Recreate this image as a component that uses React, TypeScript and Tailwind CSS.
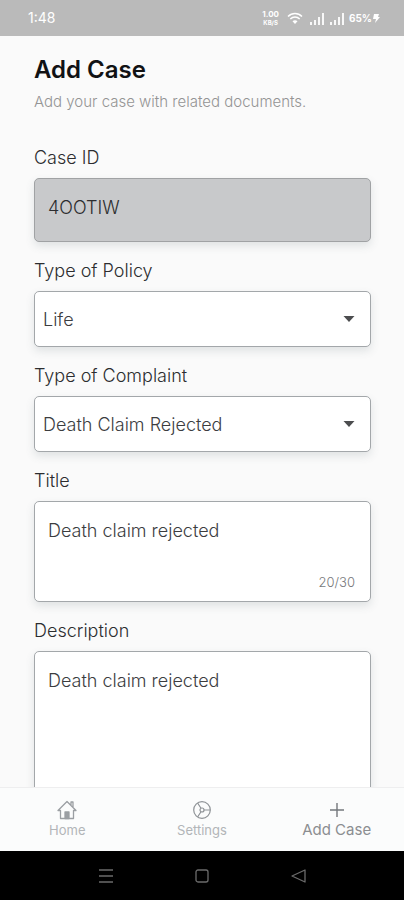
import { useState, type ReactNode } from 'react';

const field =
  'block w-full rounded-[5px] border border-[#a3a7aa] bg-white text-[#3c3d3f] shadow-[0_4px_8px_rgba(90,105,115,0.16)] outline-none';

function Field({ id, label, children }: { id: string; label: string; children: ReactNode }) {
  return (
    <div className="flex flex-col gap-2">
      <label htmlFor={id} className="text-[18px] leading-6 font-light text-[#2c2d2f]">
        {label}
      </label>
      {children}
    </div>
  );
}

function SelectField({ id, label, options }: { id: string; label: string; options: string[] }) {
  return (
    <Field id={id} label={label}>
      <div className="relative">
        <select id={id} className={`${field} h-14 appearance-none pr-10 pl-2 text-[18px] font-light`}>
          {options.map((option) => (
            <option key={option}>{option}</option>
          ))}
        </select>
        <svg className="pointer-events-none absolute top-1/2 right-4 -translate-y-1/2" width="12" height="6" viewBox="0 0 12 6" fill="#4c4d4f" aria-hidden="true">
          <path d="M0.5 0h11L6 6z" />
        </svg>
      </div>
    </Field>
  );
}

function Signal() {
  return (
    <svg width="16" height="13" viewBox="0 0 16 13" fill="white" fillOpacity="0.9" aria-hidden="true">
      <path d="M1 10h2v3H1zM5 8h2v5H5zM9 5h2v8H9zM13 1h2v12h-2z" />
    </svg>
  );
}

function StatusBar() {
  return (
    <header className="flex h-9 shrink-0 items-center justify-between bg-[#bababa] pr-6 pl-7 text-white">
      <span className="text-[14px] leading-5">1:48</span>
      <div className="flex items-center gap-1">
        <span className="flex flex-col items-center font-bold">
          <span className="text-[8px] leading-[10px]">1.00</span>
          <span className="text-[6px] leading-2">KB/S</span>
        </span>
        <svg className="mr-0.5 ml-1" width="16" height="13" viewBox="0 0 16 13" fill="none" stroke="white" strokeWidth="1.5" aria-hidden="true">
          <path d="M1 4.5C5 .5 11 .5 15 4.5M3.3 7C6 4.4 10 4.4 12.7 7" />
          <path d="M5.5 9.2C7 7.9 9 7.9 10.5 9.2L8 12z" fill="white" stroke="none" />
        </svg>
        <Signal />
        <div className="flex items-center">
          <Signal />
          <span className="pl-1 text-[10px] leading-4 font-bold">65%</span>
          <svg width="8" height="10" viewBox="0 0 8 10" fill="white" aria-hidden="true">
            <path d="M2 1h5L6 4h2L3 10l1-4H1z" />
          </svg>
        </div>
      </div>
    </header>
  );
}

function HomeIcon() {
  return (
    <svg width="20" height="20" viewBox="0 0 20 20" fill="none" stroke="#9b9fa3" strokeWidth="1.3" strokeLinejoin="round" aria-hidden="true">
      <path d="M1 10.5L10 1.5l9 9h-2.5V18.5h-13V10.5zM14 5.5V2h2v5.5" />
      <path d="M8 18.5V12h4v6.5z" fill="#9b9fa3" />
    </svg>
  );
}

function SettingsIcon() {
  return (
    <svg width="20" height="20" viewBox="0 0 20 20" fill="none" stroke="#8f9397" strokeWidth="1.2" aria-hidden="true">
      <circle cx="10" cy="10" r="8.3" />
      <circle cx="10" cy="10" r="2" />
      <path d="M12 10h6.3M9 8.3L5.6 3M9 11.7L5.6 17" />
    </svg>
  );
}

function PlusIcon() {
  return (
    <svg width="20" height="20" viewBox="0 0 20 20" stroke="#74787c" strokeWidth="1.4" aria-hidden="true">
      <path d="M10 3v14M3 10h14" />
    </svg>
  );
}

export default function App() {
  const [title, setTitle] = useState('Death claim rejected');
  const [description, setDescription] = useState('Death claim rejected');

  return (
    <div className="flex h-screen flex-col bg-[#fafafa] font-['Inter','Liberation_Sans',sans-serif]">
      <StatusBar />
      <main className="min-h-0 flex-1 overflow-hidden px-[33px] pt-4 pl-[34px]">
        <h1 className="text-[24px] leading-9 font-semibold text-[#111214]">Add Case</h1>
        <p className="text-[15px] leading-7 font-light text-[#949494]">Add your case with related documents.</p>
        <form className="mt-[30px] flex flex-col gap-[17px]">
          <Field id="case-id" label="Case ID">
            <input id="case-id" readOnly value="4OOTIW" className="block h-16 w-full rounded-[5px] border border-[#a0a2a4] bg-[#c8c9cb] px-[13px] pb-1.5 text-[18px] font-light text-[#2c2d2f] shadow-[0_4px_8px_rgba(90,105,115,0.16)] outline-none" />
          </Field>
          <SelectField id="policy" label="Type of Policy" options={['Life', 'Health', 'Motor']} />
          <SelectField id="complaint" label="Type of Complaint" options={['Death Claim Rejected', 'Claim Delayed']} />
          <Field id="title" label="Title">
            <div className="relative">
              <textarea id="title" maxLength={30} value={title} onChange={(e) => setTitle(e.target.value)} className={`${field} h-[101px] resize-none px-[13px] py-[17px] text-[18px] leading-6 font-light`} />
              <span className="absolute right-4 bottom-[10px] text-[13px] leading-5 font-light text-[#77797b]">{title.length}/30</span>
            </div>
          </Field>
          <Field id="description" label="Description">
            <textarea id="description" value={description} onChange={(e) => setDescription(e.target.value)} className={`${field} h-[200px] resize-none px-[13px] py-[17px] text-[18px] leading-6 font-light`} />
          </Field>
        </form>
      </main>
      <nav className="grid h-16 shrink-0 grid-cols-3 border-t border-[#eeeeef] bg-[#fbfcfc]">
        <a href="#home" className="flex flex-col items-center pt-3 text-[13px] leading-5 text-[#b2b5b8]">
          <HomeIcon />
          Home
        </a>
        <a href="#settings" className="flex flex-col items-center pt-3 text-[13px] leading-5 text-[#b2b5b8]">
          <SettingsIcon />
          Settings
        </a>
        <a href="#add-case" className="flex flex-col items-center pt-3 text-[15px] leading-5 text-[#8b8e91]">
          <PlusIcon />
          Add Case
        </a>
      </nav>
      <footer className="flex h-[49px] shrink-0 items-center justify-center gap-20 bg-black">
        <button type="button" aria-label="Recent apps">
          <svg width="16" height="16" viewBox="0 0 16 16" stroke="#6b6b6b" strokeWidth="1.3" aria-hidden="true">
            <path d="M1 2h14M1 8h14M1 14h14" />
          </svg>
        </button>
        <button type="button" aria-label="Home screen">
          <svg width="16" height="16" viewBox="0 0 16 16" fill="none" stroke="#6b6b6b" strokeWidth="1.3" aria-hidden="true">
            <rect x="2" y="2" width="12" height="12" rx="2" />
          </svg>
        </button>
        <button type="button" aria-label="Back">
          <svg width="16" height="16" viewBox="0 0 16 16" fill="none" stroke="#6b6b6b" strokeWidth="1.3" strokeLinejoin="round" aria-hidden="true">
            <path d="M15 2v12L2 8z" />
          </svg>
        </button>
      </footer>
    </div>
  );
}
